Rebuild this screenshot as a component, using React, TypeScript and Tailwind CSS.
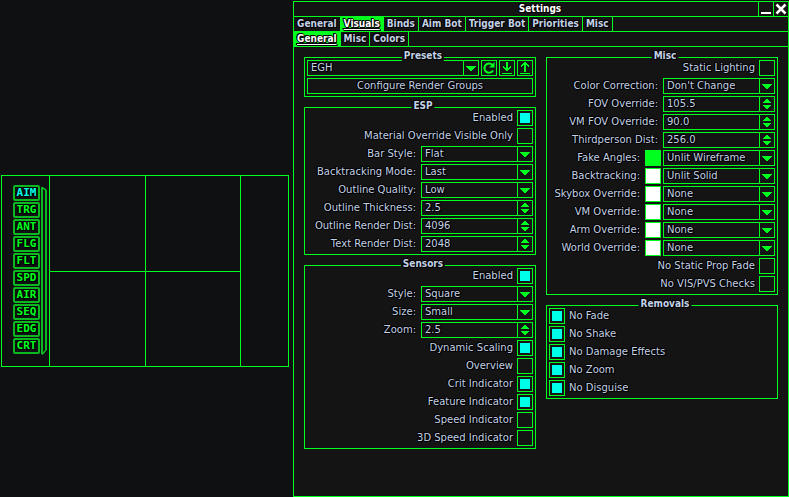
import type { ReactNode } from "react";

const outline =
  "[text-shadow:1px_0_#000,-1px_0_#000,0_1px_#000,0_-1px_#000,1px_1px_#000,-1px_-1px_#000]";
const body = "font-['DejaVu_Sans','Verdana',sans-serif] text-[10px] leading-[14px]";
const strong = "font-['DejaVu_Sans_Condensed','DejaVu_Sans',sans-serif] text-[10px] leading-[14px] font-bold";

const indicators = ["AIM", "TRG", "ANT", "FLG", "FLT", "SPD", "AIR", "SEQ", "EDG", "CRT"];

function Sensors() {
  return (
    <section className="mt-[174px] ml-px mr-1 grid h-48 w-72 shrink-0 grid-cols-[47px_95px_94px_47px] gap-px border border-[#00ff1e] bg-[#00ff1e]">
      <div className="flex gap-px bg-[#0e1012] pt-[9px] pl-[11px]">
        <ul className="flex flex-col gap-px">
          {indicators.map((name, i) => (
            <li
              key={name}
              className={`flex h-4 w-[27px] items-center justify-center rounded-[2px] border-2 border-[#0cb820] font-['DejaVu_Sans_Mono',monospace] text-[11px] leading-3 font-bold ${outline} ${i === 0 ? "text-[#00ffe8]" : "text-[#00ff1e]"}`}
            >
              {name}
            </li>
          ))}
        </ul>
        <svg viewBox="0 0 6 170" className="mt-px h-[170px] w-[6px]" fill="none" stroke="#0cb820">
          <path d="M1 1v167M5 4v160" strokeWidth="2" />
          <path d="M1 1.500L5 4M1 168.500L5 164" strokeWidth="1.500" />
        </svg>
      </div>
      <div className="grid grid-rows-2 gap-px">
        <div className="bg-[#0e1012]" />
        <div className="bg-[#0e1012]" />
      </div>
      <div className="grid grid-rows-2 gap-px">
        <div className="bg-[#0e1012]" />
        <div className="bg-[#0e1012]" />
      </div>
      <div className="bg-[#0e1012]" />
    </section>
  );
}

function Tabs({ names, active, label }: { names: string[]; active: string; label: string }) {
  return (
    <nav aria-label={label} className="flex h-[15px] border-b border-[#00ff1e]">
      {names.map((name) => (
        <button
          key={name}
          type="button"
          className={`border-r border-[#00ff1e] px-[3px] whitespace-nowrap ${strong} ${outline} ${
            name === active ? "bg-[#00ff1e] text-white underline underline-offset-2" : "text-[#c4d2e6]"
          }`}
        >
          {name}
        </button>
      ))}
    </nav>
  );
}

function Group({ title, children }: { title: string; children: ReactNode }) {
  return (
    <fieldset className="relative flex min-w-0 flex-col gap-0.5 border border-[#00ff1e] p-0.5">
      <legend
        className={`absolute -top-[9px] left-[calc(50%+3px)] h-3 -translate-x-1/2 bg-[#141414] px-0.5 ${strong} ${outline}`}
      >
        {title}
      </legend>
      {children}
    </fieldset>
  );
}

const idOf = (scope: string, label: string) => `${scope}-${label}`.toLowerCase().replace(/[^a-z0-9]+/g, "-");

function CheckRow({ scope, label, checked = false, left = false }: { scope: string; label: string; checked?: boolean; left?: boolean }) {
  const id = idOf(scope, label);
  return (
    <div className={`flex h-4 items-center gap-1 ${left ? "flex-row-reverse justify-end" : "justify-end"}`}>
      <label htmlFor={id}>{label}</label>
      <input
        id={id}
        type="checkbox"
        defaultChecked={checked}
        className="size-4 shrink-0 appearance-none border border-[#00ff1e] bg-clip-content p-0.5 checked:bg-[#00ffe8]"
      />
    </div>
  );
}

function DropDown({ id, value, label }: { id: string; value: string; label?: string }) {
  return (
    <div className="flex h-4 min-w-0 flex-1 border border-[#00ff1e]">
      <select
        id={id}
        aria-label={label}
        defaultValue={value}
        className={`min-w-0 flex-1 appearance-none bg-transparent pl-[3px] ${outline}`}
      >
        <option>{value}</option>
      </select>
      <span className="flex w-[15px] items-center justify-center border-l border-[#00ff1e]">
        <svg viewBox="0 0 10 5" className="mt-px h-[5px] w-[10px]" fill="#00ff1e" shapeRendering="crispEdges">
          <path d="M0 0h10v1H9v1H8v1H7v1H6v1H4V4H3V3H2V2H1V1H0z" />
        </svg>
      </span>
    </div>
  );
}

function SelectRow({ scope, label, value, swatch }: { scope: string; label: string; value: string; swatch?: string }) {
  const id = idOf(scope, label);
  return (
    <div className="flex h-4 items-center justify-end gap-0.5">
      <label htmlFor={id} className="pr-[3px]">{label}:</label>
      {swatch && (
        <button
          type="button"
          aria-label={`${label} color`}
          className={`size-4 shrink-0 border border-[#00ff1e] ${swatch}`}
        />
      )}
      <div className="flex w-28 shrink-0">
        <DropDown id={id} value={value} />
      </div>
    </div>
  );
}

function NumberRow({ scope, label, value }: { scope: string; label: string; value: string }) {
  const id = idOf(scope, label);
  return (
    <div className="flex h-4 items-center justify-end gap-0.5">
      <label htmlFor={id} className="pr-[3px]">{label}:</label>
      <div className="flex h-4 w-28 shrink-0 border border-[#00ff1e]">
        <input
          id={id}
          type="text"
          inputMode="decimal"
          defaultValue={value}
          className={`min-w-0 flex-1 bg-transparent pl-[3px] ${outline}`}
        />
        <span className="flex w-[15px] flex-col items-center justify-center gap-0.5 border-l border-[#00ff1e]">
          <button type="button" aria-label={`Increase ${label}`}>
            <svg viewBox="0 0 8 4" className="h-1 w-2" fill="#00ff1e" shapeRendering="crispEdges">
              <path d="M3 0h2v1h1v1h1v1h1v1H0V3h1V2h1V1h1z" />
            </svg>
          </button>
          <button type="button" aria-label={`Decrease ${label}`}>
            <svg viewBox="0 0 8 4" className="h-1 w-2" fill="#00ff1e" shapeRendering="crispEdges">
              <path d="M0 0h8v1H7v1H6v1H5v1H3V3H2V2H1V1H0z" />
            </svg>
          </button>
        </span>
      </div>
    </div>
  );
}

function IconButton({ label, children }: { label: string; children: ReactNode }) {
  return (
    <button type="button" aria-label={label} className="flex size-4 shrink-0 items-center justify-center border border-[#00ff1e]">
      <svg viewBox="0 0 14 14" className="size-3.5" fill="#00ff1e">
        {children}
      </svg>
    </button>
  );
}

function SettingsWindow() {
  return (
    <main className="flex min-w-0 flex-1 flex-col border border-[#00ff1e] bg-[#141414]">
      <header className="flex h-[15px] border-b border-[#00ff1e] pl-7">
        <h1 className={`flex-1 text-center text-white ${strong}`}>Settings</h1>
        <button type="button" aria-label="Minimize" className="flex w-[15px] items-center justify-center border-l border-[#00ff1e]">
          <svg viewBox="0 0 14 14" className="size-3.5" fill="#fff">
            <path d="M2 10h10v2H2z" />
          </svg>
        </button>
        <button type="button" aria-label="Close" className="flex w-[15px] items-center justify-center border-l border-[#00ff1e]">
          <svg viewBox="0 0 14 14" className="size-3.5" stroke="#fff" strokeWidth="2.500">
            <path d="M2.500 2.500l9 9M11.500 2.500l-9 9" />
          </svg>
        </button>
      </header>
      <Tabs
        label="Sections"
        active="Visuals"
        names={["General", "Visuals", "Binds", "Aim Bot", "Trigger Bot", "Priorities", "Misc"]}
      />
      <Tabs label="Visuals pages" active="General" names={["General", "Misc", "Colors"]} />

      <div className="grid grid-cols-2 items-start gap-2.5 p-2.5">
        <div className="flex flex-col gap-2.5">
          <Group title="Presets">
            <div className="flex gap-0.5">
              <DropDown id="preset" label="Preset" value="EGH" />
              <IconButton label="Reload presets">
                <path d="M10.200 3.800A4.600 4.600 0 1 0 11 9.500" fill="none" stroke="#00ff1e" strokeWidth="2" />
                <path d="M12.500 1v5.500H7z" />
              </IconButton>
              <IconButton label="Load preset">
                <path shapeRendering="crispEdges" d="M6 1h2v6h1V6h1V5h1v2h-1v1H9v1H8v1H6V9H5V8H4V7H3V5h1v1h1v1h1zM2 12h10v1H2z" />
              </IconButton>
              <IconButton label="Save preset">
                <path shapeRendering="crispEdges" d="M6 11h2V4h1v1h1v1h1V4h-1V3H9V2H8V1H6v1H5v1H4v1H3v2h1V5h1V4h1zM2 12h10v1H2z" />
              </IconButton>
            </div>
            <button type="button" className={`flex h-4 items-center justify-center border border-[#00ff1e] ${outline}`}>
              Configure Render Groups
            </button>
          </Group>
          <Group title="ESP">
            <CheckRow scope="esp" label="Enabled" checked />
            <CheckRow scope="esp" label="Material Override Visible Only" />
            <SelectRow scope="esp" label="Bar Style" value="Flat" />
            <SelectRow scope="esp" label="Backtracking Mode" value="Last" />
            <SelectRow scope="esp" label="Outline Quality" value="Low" />
            <NumberRow scope="esp" label="Outline Thickness" value="2.5" />
            <NumberRow scope="esp" label="Outline Render Dist" value="4096" />
            <NumberRow scope="esp" label="Text Render Dist" value="2048" />
          </Group>
          <Group title="Sensors">
            <CheckRow scope="sensors" label="Enabled" checked />
            <SelectRow scope="sensors" label="Style" value="Square" />
            <SelectRow scope="sensors" label="Size" value="Small" />
            <NumberRow scope="sensors" label="Zoom" value="2.5" />
            <CheckRow scope="sensors" label="Dynamic Scaling" checked />
            <CheckRow scope="sensors" label="Overview" />
            <CheckRow scope="sensors" label="Crit Indicator" checked />
            <CheckRow scope="sensors" label="Feature Indicator" checked />
            <CheckRow scope="sensors" label="Speed Indicator" />
            <CheckRow scope="sensors" label="3D Speed Indicator" />
          </Group>
        </div>
        <div className="flex flex-col gap-2.5">
          <Group title="Misc">
            <CheckRow scope="misc" label="Static Lighting" />
            <SelectRow scope="misc" label="Color Correction" value="Don't Change" />
            <NumberRow scope="misc" label="FOV Override" value="105.5" />
            <NumberRow scope="misc" label="VM FOV Override" value="90.0" />
            <NumberRow scope="misc" label="Thirdperson Dist" value="256.0" />
            <SelectRow scope="misc" label="Fake Angles" value="Unlit Wireframe" swatch="bg-[#00ff1e]" />
            <SelectRow scope="misc" label="Backtracking" value="Unlit Solid" swatch="bg-white" />
            <SelectRow scope="misc" label="Skybox Override" value="None" swatch="bg-white" />
            <SelectRow scope="misc" label="VM Override" value="None" swatch="bg-white" />
            <SelectRow scope="misc" label="Arm Override" value="None" swatch="bg-white" />
            <SelectRow scope="misc" label="World Override" value="None" swatch="bg-white" />
            <CheckRow scope="misc" label="No Static Prop Fade" />
            <CheckRow scope="misc" label="No VIS/PVS Checks" />
          </Group>
          <Group title="Removals">
            {["No Fade", "No Shake", "No Damage Effects", "No Zoom", "No Disguise"].map((label) => (
              <CheckRow key={label} scope="removals" label={label} checked left />
            ))}
          </Group>
        </div>
      </div>
    </main>
  );
}

export default function App() {
  return (
    <div className={`flex min-h-screen bg-[#0e1012] pt-px text-[#c4d2e6] ${body} ${outline}`}>
      <Sensors />
      <SettingsWindow />
    </div>
  );
}
